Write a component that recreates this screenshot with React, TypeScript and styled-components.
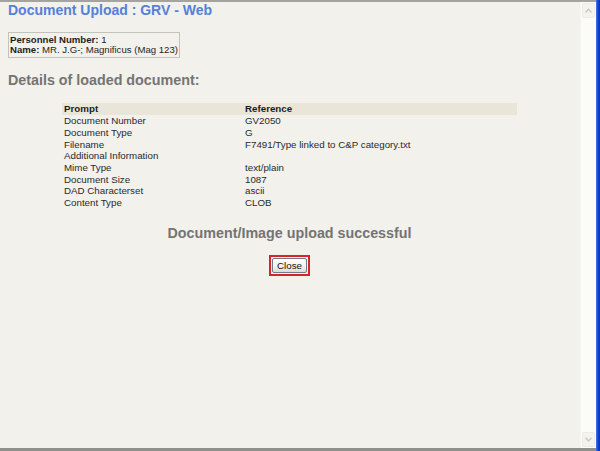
import React from "react";
import styled, { createGlobalStyle } from "styled-components";

const Global = createGlobalStyle`
  html, body { margin: 0; padding: 0; background: #f2f1eb; }
  body { font-family: "Liberation Sans", Arial, sans-serif; }
`;

const Frame = styled.div`
  width: 600px;
  height: 451px;
  display: flex;
  overflow: hidden;
`;

const WindowBody = styled.div`
  flex: 1;
  display: flex;
  flex-direction: column;
  border-top: 2px solid #a3a3a0;
  border-bottom: 3px solid #8f8f8c;
  min-width: 0;
`;

const BlueEdge = styled.div`
  width: 4px;
  background: linear-gradient(to right, #4a78e6, #1541d4 50%, #0a2fbf);
`;

const Viewport = styled.div`
  flex: 1;
  display: flex;
  min-height: 0;
`;

const Page = styled.div`
  flex: 1;
  padding: 0 9px 0 8px;
  background: #f2f1eb;
  overflow: hidden;
  color: #262626;
`;

const Scrollbar = styled.div`
  width: 15px;
  display: flex;
  flex-direction: column;
  justify-content: space-between;
  background: #fbfbf8;
  border-left: 1px solid #f6f5f0;
`;

const ArrowButton = styled.div`
  height: 13px;
  margin: 1px 1px;
  display: flex;
  align-items: center;
  justify-content: center;
  background: #f4f3ee;
  border: 1px solid #ecebe4;
  border-radius: 2px;
`;

const Title = styled.h1`
  margin: 0;
  font-size: 14px;
  line-height: 16px;
  font-weight: bold;
  color: #5580d8;
`;

const PersonBox = styled.div`
  margin-top: 14px;
  width: fit-content;
  border: 1px solid #c3c2bc;
  padding: 1.7px 1px 1.5px 1px;
  font-size: 9.6px;
  line-height: 10.4px;
  color: #1e1e1e;
`;

const Label = styled.b`
  font-weight: bold;
`;

const Heading = styled.h2<{ $top: number; $center?: boolean }>`
  margin: ${(p) => p.$top}px 0 0;
  font-size: 14.3px;
  line-height: 16px;
  font-weight: bold;
  color: #747474;
  text-align: ${(p) => (p.$center ? "center" : "left")};
`;

const Table = styled.div`
  margin: 15.85px auto 0;
  width: 455px;
  font-size: 9.75px;
`;

const Row = styled.div<{ $head?: boolean }>`
  display: grid;
  grid-template-columns: 181px 1fr;
  height: 11.7px;
  line-height: 11.7px;
  background: ${(p) => (p.$head ? "#e9e6d9" : "transparent")};
  font-weight: ${(p) => (p.$head ? "bold" : "normal")};
  color: ${(p) => (p.$head ? "#1c1c1c" : "#2a2a2a")};
`;

const Cell = styled.div`
  padding-left: 2px;
  white-space: nowrap;
`;

const ButtonRow = styled.div`
  margin-top: 13.25px;
  display: flex;
  justify-content: center;
`;

const FocusRing = styled.div`
  border: 2px solid #d7242c;
  padding: 1px;
  display: flex;
`;

const CloseButton = styled.button`
  width: 35px;
  height: 15px;
  padding: 0;
  margin: 0;
  border: 1px solid #6f7b88;
  border-radius: 2px;
  background: linear-gradient(to bottom, #ffffff, #f1f1ec 60%, #dcdcd4);
  font-family: "Liberation Sans", Arial, sans-serif;
  font-size: 9.75px;
  line-height: 13px;
  color: #111;
`;

const rows: [string, string][] = [
  ["Document Number", "GV2050"],
  ["Document Type", "G"],
  ["Filename", "F7491/Type linked to C&P category.txt"],
  ["Additional Information", ""],
  ["Mime Type", "text/plain"],
  ["Document Size", "1087"],
  ["DAD Characterset", "ascii"],
  ["Content Type", "CLOB"],
];

const Arrow = ({ up }: { up?: boolean }) => (
  <svg width="7" height="5" viewBox="0 0 7 5">
    <path
      d={up ? "M0.5 4.5 L3.5 1.2 L6.5 4.5" : "M0.5 0.8 L3.5 4 L6.5 0.8"}
      fill="none"
      stroke="#c9c8c0"
      strokeWidth="1.4"
    />
  </svg>
);

export default function App() {
  return (
    <>
      <Global />
      <Frame>
        <WindowBody>
          <Viewport>
            <Page>
              <Title>Document Upload : GRV - Web</Title>
              <PersonBox>
                <div>
                  <Label>Personnel Number:</Label> 1
                </div>
                <div>
                  <Label>Name:</Label> MR. J.G-; Magnificus (Mag 123)
                </div>
              </PersonBox>
              <Heading $top={13.65}>Details of loaded document:</Heading>
              <Table>
                <Row $head>
                  <Cell>Prompt</Cell>
                  <Cell>Reference</Cell>
                </Row>
                {rows.map(([k, v]) => (
                  <Row key={k}>
                    <Cell>{k}</Cell>
                    <Cell>{v}</Cell>
                  </Row>
                ))}
              </Table>
              <Heading $top={16.65} $center>
                Document/Image upload successful
              </Heading>
              <ButtonRow>
                <FocusRing>
                  <CloseButton>Close</CloseButton>
                </FocusRing>
              </ButtonRow>
            </Page>
            <Scrollbar>
              <ArrowButton>
                <Arrow up />
              </ArrowButton>
              <ArrowButton>
                <Arrow />
              </ArrowButton>
            </Scrollbar>
          </Viewport>
        </WindowBody>
        <BlueEdge />
      </Frame>
    </>
  );
}
